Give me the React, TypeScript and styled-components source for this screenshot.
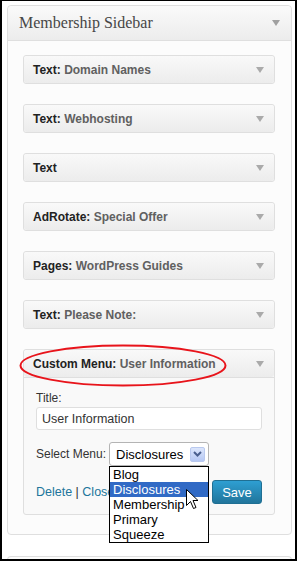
import styled, { createGlobalStyle } from 'styled-components';

const GlobalStyle = createGlobalStyle`
  html, body {
    margin: 0;
    padding: 0;
    background: #fff;
  }
  body {
    font-family: 'Liberation Sans', Arial, sans-serif;
  }
`;

type WidgetInfo = {
  type: string;
  name?: string;
};

const widgets: WidgetInfo[] = [
  { type: 'Text', name: 'Domain Names' },
  { type: 'Text', name: 'Webhosting' },
  { type: 'Text' },
  { type: 'AdRotate', name: 'Special Offer' },
  { type: 'Pages', name: 'WordPress Guides' },
  { type: 'Text', name: 'Please Note:' },
];

const menus = ['Blog', 'Disclosures', 'Membership', 'Primary', 'Squeeze'];

function Arrow({ color = '#aaa' }: { color?: string }) {
  return (
    <svg width="8" height="6" viewBox="0 0 8 6">
      <path d="M0 0 L8 0 L4 6 Z" fill={color} />
    </svg>
  );
}

function WidgetHeader({ type, name }: WidgetInfo) {
  return (
    <WidgetTop>
      <WidgetTitle>
        {name ? `${type}: ` : type}
        {name && <InTitle>{name}</InTitle>}
      </WidgetTitle>
      <Arrow />
    </WidgetTop>
  );
}

export default function App() {
  return (
    <>
      <GlobalStyle />
      <Frame>
        <Panel>
          <PanelHeader>
            <PanelTitle>Membership Sidebar</PanelTitle>
            <Arrow color="#a0a0a0" />
          </PanelHeader>
          <PanelBody>
            {widgets.map((w, i) => (
              <Widget key={i}>
                <WidgetHeader {...w} />
              </Widget>
            ))}
            <Widget>
              <WidgetHeader type="Custom Menu" name="User Information" />
              <Ellipse width="208" height="43" viewBox="0 0 208 43">
                <ellipse
                  cx="104"
                  cy="21.5"
                  rx="102.5"
                  ry="20"
                  fill="none"
                  stroke="#e8141b"
                  strokeWidth="2"
                />
              </Ellipse>
              <WidgetInside>
                <Label>Title:</Label>
                <TextInput>User Information</TextInput>
                <SelectRow>
                  <Label>Select Menu:</Label>
                  <SelectWrap>
                    <SelectBox>
                      <span>Disclosures</span>
                      <SelectButton>
                        <svg width="9" height="6" viewBox="0 0 9 6">
                          <path
                            d="M1 1 L4.5 4.5 L8 1"
                            fill="none"
                            stroke="#4a5f8e"
                            strokeWidth="2"
                          />
                        </svg>
                      </SelectButton>
                    </SelectBox>
                    <DropList>
                      {menus.map(m => (
                        <DropItem key={m} $active={m === 'Disclosures'}>
                          {m}
                        </DropItem>
                      ))}
                      <Cursor width="13" height="21" viewBox="0 0 13 21">
                        <path
                          d="M0.5 0.5 L0.5 16.5 L4.5 12.5 L7.5 19.5 L10 18.5 L7 11.5 L12 11.5 Z"
                          fill="#fff"
                          stroke="#000"
                          strokeWidth="1"
                        />
                      </Cursor>
                    </DropList>
                  </SelectWrap>
                </SelectRow>
                <ControlRow>
                  <Links>
                    <Link>Delete</Link> | <Link>Close</Link>
                  </Links>
                  <SaveButton>Save</SaveButton>
                </ControlRow>
              </WidgetInside>
            </Widget>
          </PanelBody>
        </Panel>
        <NextPanel />
      </Frame>
    </>
  );
}

const Frame = styled.div`
  box-sizing: border-box;
  width: 297px;
  height: 561px;
  overflow: hidden;
  border: solid #000;
  border-width: 1px 2px 2px 2px;
  padding: 4px 3px 0 5px;
  background: #fff;
  display: flex;
  flex-direction: column;
  gap: 21px;
`;

const Panel = styled.div`
  border: 1px solid #dfdfdf;
  border-radius: 4px;
  background: #fcfcfc;
  flex-shrink: 0;
`;

const NextPanel = styled.div`
  border: 1px solid #dfdfdf;
  border-bottom: none;
  border-radius: 4px 4px 0 0;
  background: #fcfcfc;
  height: 40px;
  flex-shrink: 0;
`;

const PanelHeader = styled.div`
  height: 34px;
  display: flex;
  align-items: center;
  justify-content: space-between;
  padding: 0 11px 0 11px;
  background: linear-gradient(#fafafa, #ececec);
  border-bottom: 1px solid #dfdfdf;
  border-radius: 4px 4px 0 0;
`;

const PanelTitle = styled.span`
  font-family: 'Liberation Serif', 'Times New Roman', serif;
  font-size: 16px;
  color: #464646;
`;

const PanelBody = styled.div`
  padding: 14px 16px 19px 15px;
  display: flex;
  flex-direction: column;
  gap: 20px;
`;

const Widget = styled.div`
  position: relative;
  border: 1px solid #dfdfdf;
  border-radius: 3px;
  background: #f9f9f9;
`;

const WidgetTop = styled.div`
  height: 27px;
  display: flex;
  align-items: center;
  justify-content: space-between;
  padding: 0 10px 0 9px;
  background: linear-gradient(#f9f9f9, #ececec);
  border-radius: 3px;
`;

const WidgetTitle = styled.span`
  font-size: 12px;
  font-weight: bold;
  color: #222;
  white-space: nowrap;
`;

const InTitle = styled.span`
  color: #606060;
`;

const Ellipse = styled.svg`
  position: absolute;
  left: -5px;
  top: -6px;
  pointer-events: none;
`;

const WidgetInside = styled.div`
  border-top: 1px solid #dfdfdf;
  padding: 12px 12px 10px 12px;
  display: flex;
  flex-direction: column;
`;

const Label = styled.span`
  font-size: 12px;
  line-height: 16px;
  color: #333;
`;

const TextInput = styled.div`
  box-sizing: border-box;
  margin-top: 1px;
  height: 23px;
  border: 1px solid #dfdfdf;
  border-radius: 3px;
  background: #fff;
  padding: 0 5px;
  display: flex;
  align-items: center;
  font-size: 12.5px;
  color: #333;
`;

const SelectRow = styled.div`
  margin-top: 12px;
  display: flex;
  align-items: center;
  gap: 3px;
`;

const SelectWrap = styled.div`
  position: relative;
`;

const SelectBox = styled.div`
  box-sizing: border-box;
  width: 100px;
  height: 24px;
  border: 1px solid #b4b4b4;
  border-radius: 3px;
  background: #fff;
  display: flex;
  align-items: center;
  justify-content: space-between;
  padding: 0 3px 0 6px;
  font-size: 13px;
  color: #000;
`;

const SelectButton = styled.div`
  box-sizing: border-box;
  width: 15px;
  height: 15px;
  border: 1px solid #b9c9ef;
  border-radius: 2px;
  background: linear-gradient(#dce6fc, #b6c8f4);
  display: flex;
  align-items: center;
  justify-content: center;
`;

const DropList = styled.div`
  position: absolute;
  top: 24px;
  left: 0;
  width: 100px;
  box-sizing: border-box;
  border: 1px solid #000;
  background: #fff;
  z-index: 5;
`;

const DropItem = styled.div<{ $active?: boolean }>`
  height: 15px;
  line-height: 15px;
  padding: 0 3px;
  font-size: 13px;
  color: ${p => (p.$active ? '#fff' : '#000')};
  background: ${p => (p.$active ? '#316ac5' : 'transparent')};
`;

const Cursor = styled.svg`
  position: absolute;
  left: 76px;
  top: 22px;
`;

const ControlRow = styled.div`
  margin-top: 14px;
  display: flex;
  align-items: center;
  justify-content: space-between;
`;

const Links = styled.span`
  font-size: 12.5px;
  color: #333;
`;

const Link = styled.span`
  color: #21759b;
`;

const SaveButton = styled.div`
  box-sizing: border-box;
  width: 50px;
  height: 24px;
  border: 1px solid #1f6f93;
  border-radius: 3px;
  background: linear-gradient(#2e9fd2, #21759b);
  color: #fff;
  font-size: 13px;
  display: flex;
  align-items: center;
  justify-content: center;
`;
